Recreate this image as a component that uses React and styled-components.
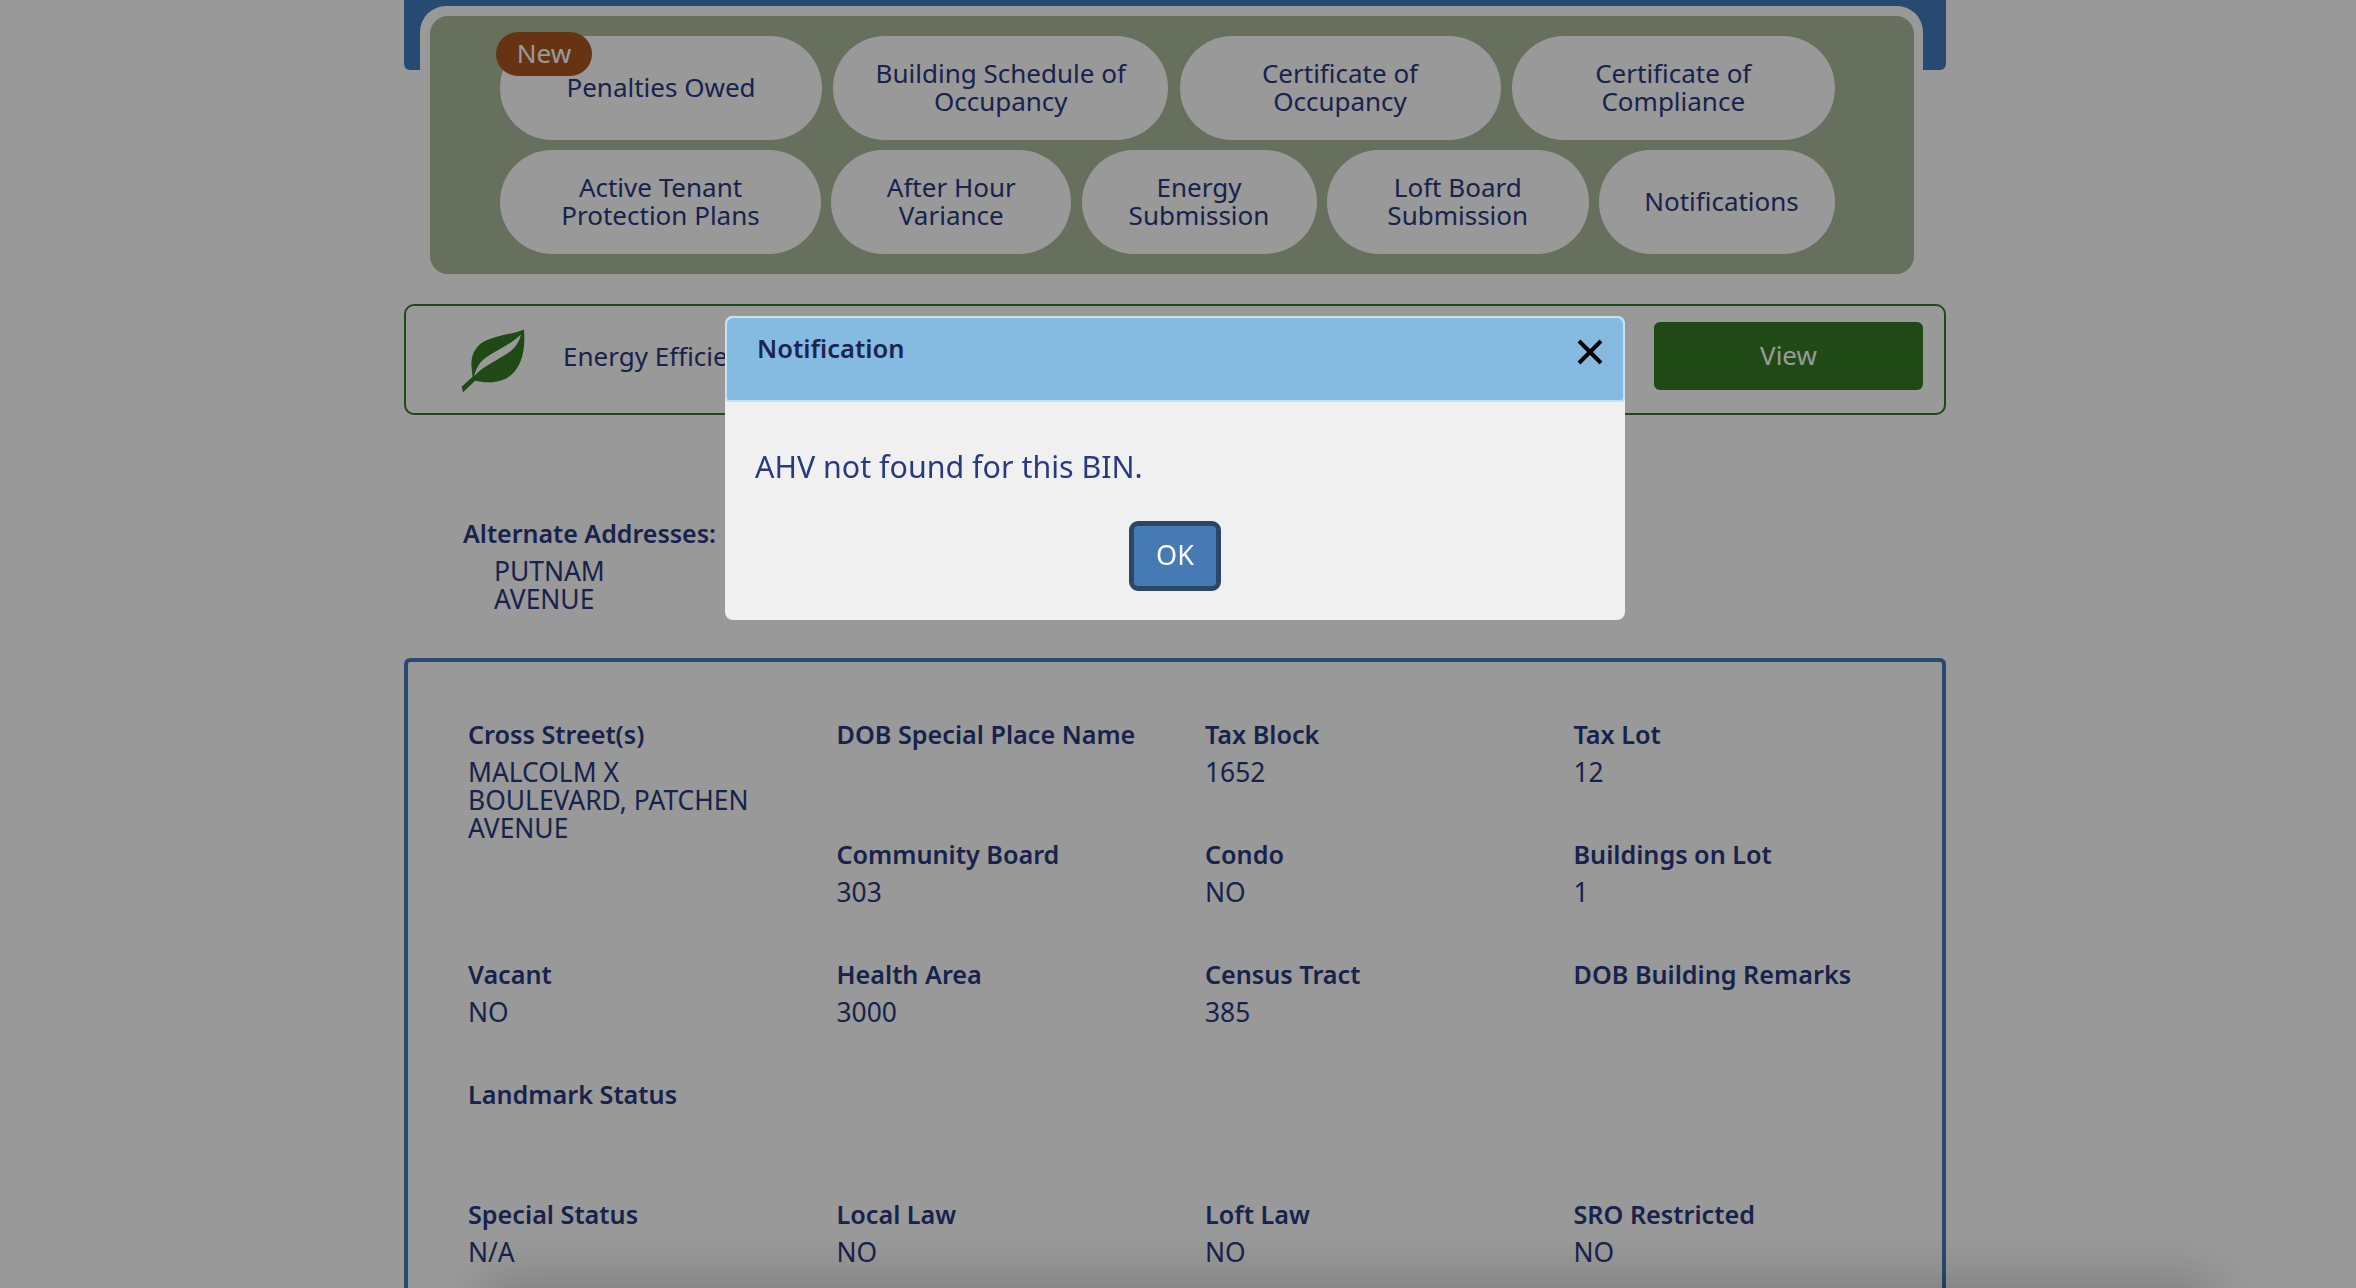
import React from "react";
import styled, { createGlobalStyle } from "styled-components";

const Global = createGlobalStyle`
  html, body { margin: 0; height: 100%; overflow: hidden; background: #fff; }
  body { font-family: "Noto Sans", "Open Sans", sans-serif; color: #2a3a80; }
`;
const Page = styled.div`
  width: 1542px;
  margin-left: 404px;
`;
const TopFrame = styled.div`
  height: 70px;
  padding: 6px 23px 0 16px;
  background: #407cbb;
  border-radius: 0 0 6px 6px;
  box-sizing: border-box;
  margin-bottom: 234px;
`;
const TabBody = styled.div`
  background: #fff;
  border-radius: 26px 26px 0 0;
  padding: 10px 9px 0 10px;
`;
const GreenPanel = styled.div`
  height: 258px;
  box-sizing: border-box;
  background: #acbb9b;
  border-radius: 18px;
  padding: 20px 0 0 70px;
  display: flex;
  flex-direction: column;
  gap: 10px;
`;
const LinkRow = styled.div`
  display: flex;
  gap: ${(p) => p.$gap}px;
`;
const Pill = styled.div`
  position: relative;
  width: ${(p) => p.$w}px;
  height: 104px;
  box-sizing: border-box;
  padding-bottom: 3px;
  padding-left: ${(p) => p.$indent || 0}px;
  background: #fff;
  border-radius: 52px;
  display: flex;
  align-items: center;
  justify-content: center;
  text-align: center;
  font-size: 26px;
  line-height: 28px;
  color: #2a3a80;
`;
const NewBadge = styled.span`
  position: absolute;
  left: -4px;
  top: -4px;
  width: 96px;
  height: 44px;
  padding-bottom: 3px;
  box-sizing: border-box;
  border-radius: 22px;
  background: #aa5820;
  color: #fff;
  display: flex;
  align-items: center;
  justify-content: center;
  font-size: 26px;
`;
const Text = styled.span`
  display: block;
  max-width: ${(p) => p.$w - 36}px;
`;
const EnergyCard = styled.div`
  height: 111px;
  box-sizing: border-box;
  border: 2px solid #347a23;
  border-radius: 10px;
  display: flex;
  align-items: center;
  padding: 0 21px 8px 55px;
`;
const LeafIcon = styled.svg`
  width: 71px;
  height: 71px;
  flex: none;
  margin-top: 12px;
  margin-left: -2px;
`;
const EnergyText = styled.span`
  flex: 1;
  margin-left: 33px;
  font-size: 26px;
`;
const ViewButton = styled.div`
  width: 269px;
  height: 68px;
  padding-bottom: 2px;
  box-sizing: border-box;
  background: #347a23;
  border-radius: 6px;
  color: #fff;
  display: flex;
  align-items: center;
  justify-content: center;
  font-size: 26px;
`;
const AltBlock = styled.div`
  padding: 101px 0 0 59px;
`;
const AltLabel = styled.div`
  font-size: 25px;
  font-weight: 600;
  line-height: 34px;
  margin-bottom: 7px;
`;
const AltValue = styled.div`
  font-size: 26.4px;
  line-height: 28px;
  margin-left: 31px;
`;
const InfoBox = styled.div`
  margin-top: 45px;
  border: 4px solid #407cbb;
  border-bottom: 0;
  border-radius: 6px 6px 0 0;
  padding: 55px 0 0 60px;
  display: grid;
  grid-template-columns: repeat(4, 368.5px);
  grid-auto-rows: 120px;
`;
const Cell = styled.div`
  grid-row: span ${(p) => p.$span || 1};
`;
const Wide = styled(Cell)`
  grid-column: 1 / -1;
`;
const Label = styled.div`
  font-size: 25.2px;
  font-weight: 600;
  line-height: 34px;
  margin-bottom: 6.5px;
`;
const Value = styled.div`
  font-size: 26.4px;
  line-height: 28px;
  width: 310px;
`;
const Overlay = styled.div`
  position: fixed;
  inset: 0;
  background: rgba(0, 0, 0, 0.4);
`;
const BottomShade = styled.div`
  position: fixed;
  left: 500px;
  top: 1296px;
  width: 1700px;
  height: 40px;
  box-shadow: 0 0 56px 16px rgba(0, 0, 0, 0.2);
`;
const Modal = styled.div`
  position: fixed;
  left: 725px;
  top: 316px;
  width: 900px;
  height: 304px;
  background: #f0f0f0;
  border-radius: 8px;
  display: flex;
  flex-direction: column;
`;
const ModalHeader = styled.div`
  height: 86px;
  box-sizing: border-box;
  background: #85bbe0;
  border: 2px solid #c5e3ee;
  border-radius: 8px 8px 4px 4px;
  padding: 11px 19px 0 30px;
  display: flex;
  justify-content: space-between;
  font-size: 25.5px;
  font-weight: 600;
  line-height: 38px;
  color: #1b2550;
`;
const CloseIcon = styled.svg`
  width: 28px;
  height: 26px;
  margin-top: 10px;
`;
const ModalBody = styled.div`
  padding: 45px 0 0 30px;
  font-size: 30.4px;
  line-height: 40px;
  color: #2a3a80;
`;
const ModalActions = styled.div`
  display: flex;
  justify-content: center;
  margin-top: 34px;
`;
const OkButton = styled.div`
  width: 92px;
  height: 70px;
  padding-bottom: 3px;
  box-sizing: border-box;
  border: 5px solid #2c4766;
  border-radius: 9px;
  background: #457ab5;
  color: #fff;
  font-size: 27px;
  display: flex;
  align-items: center;
  justify-content: center;
`;

const row1 = [
  [322, "Penalties Owed", true],
  [335, "Building Schedule of Occupancy"],
  [321, "Certificate of Occupancy"],
  [323, "Certificate of Compliance"],
];
const row2 = [
  [321, "Active Tenant Protection Plans"],
  [240, "After Hour Variance"],
  [235, "Energy Submission"],
  [262, "Loft Board Submission"],
  [236, "Notifications", false, 9],
];
const info = [
  ["Cross Street(s)", "MALCOLM X BOULEVARD, PATCHEN AVENUE", 2],
  ["DOB Special Place Name", ""],
  ["Tax Block", "1652"],
  ["Tax Lot", "12"],
  ["Community Board", "303"],
  ["Condo", "NO"],
  ["Buildings on Lot", "1"],
  ["Vacant", "NO"],
  ["Health Area", "3000"],
  ["Census Tract", "385"],
  ["DOB Building Remarks", ""],
  ["Landmark Status", "", 1, 4],
  ["Special Status", "N/A"],
  ["Local Law", "NO"],
  ["Loft Law", "NO"],
  ["SRO Restricted", "NO"],
];

const renderPill = ([w, t, isNew, indent]) => (
  <Pill key={t} $w={w} $indent={indent}>
    {isNew && <NewBadge>New</NewBadge>}
    <Text $w={w}>{t}</Text>
  </Pill>
);

export default function App() {
  return (
    <>
      <Global />
      <Page>
        <TopFrame>
          <TabBody>
            <GreenPanel>
              <LinkRow $gap={11.25}>{row1.map(renderPill)}</LinkRow>
              <LinkRow $gap={10.25}>{row2.map(renderPill)}</LinkRow>
            </GreenPanel>
          </TabBody>
        </TopFrame>
        <EnergyCard>
          <LeafIcon viewBox="60 50 210 210">
            <path
              fill="#347a23"
              fillRule="evenodd"
              d="M252 60C215 75 170 78 135 95C105 112 95 140 97 170L100 200L68 230L72 246L108 212C130 218 170 220 200 205C245 180 258 120 252 60ZM243 75C205 112 152 128 124 157C114 170 107 185 105 198C128 172 162 157 192 138C222 122 238 100 243 75Z"
            />
          </LeafIcon>
          <EnergyText>Energy Efficiency</EnergyText>
          <ViewButton>View</ViewButton>
        </EnergyCard>
        <AltBlock>
          <AltLabel>Alternate Addresses:</AltLabel>
          <AltValue>PUTNAM<br />AVENUE</AltValue>
        </AltBlock>
        <InfoBox>
          {info.map(([l, v, span, wide]) => {
            const C = wide ? Wide : Cell;
            return (
              <C key={l} $span={span}>
                <Label>{l}</Label>
                <Value>{v}</Value>
              </C>
            );
          })}
        </InfoBox>
      </Page>
      <Overlay />
      <BottomShade />
      <Modal>
        <ModalHeader>
          <span>Notification</span>
          <CloseIcon viewBox="0 0 28 26">
            <path d="M3 2L25 24M25 2L3 24" stroke="#000" strokeWidth="4" fill="none" />
          </CloseIcon>
        </ModalHeader>
        <ModalBody>AHV not found for this BIN.</ModalBody>
        <ModalActions>
          <OkButton>OK</OkButton>
        </ModalActions>
      </Modal>
    </>
  );
}
